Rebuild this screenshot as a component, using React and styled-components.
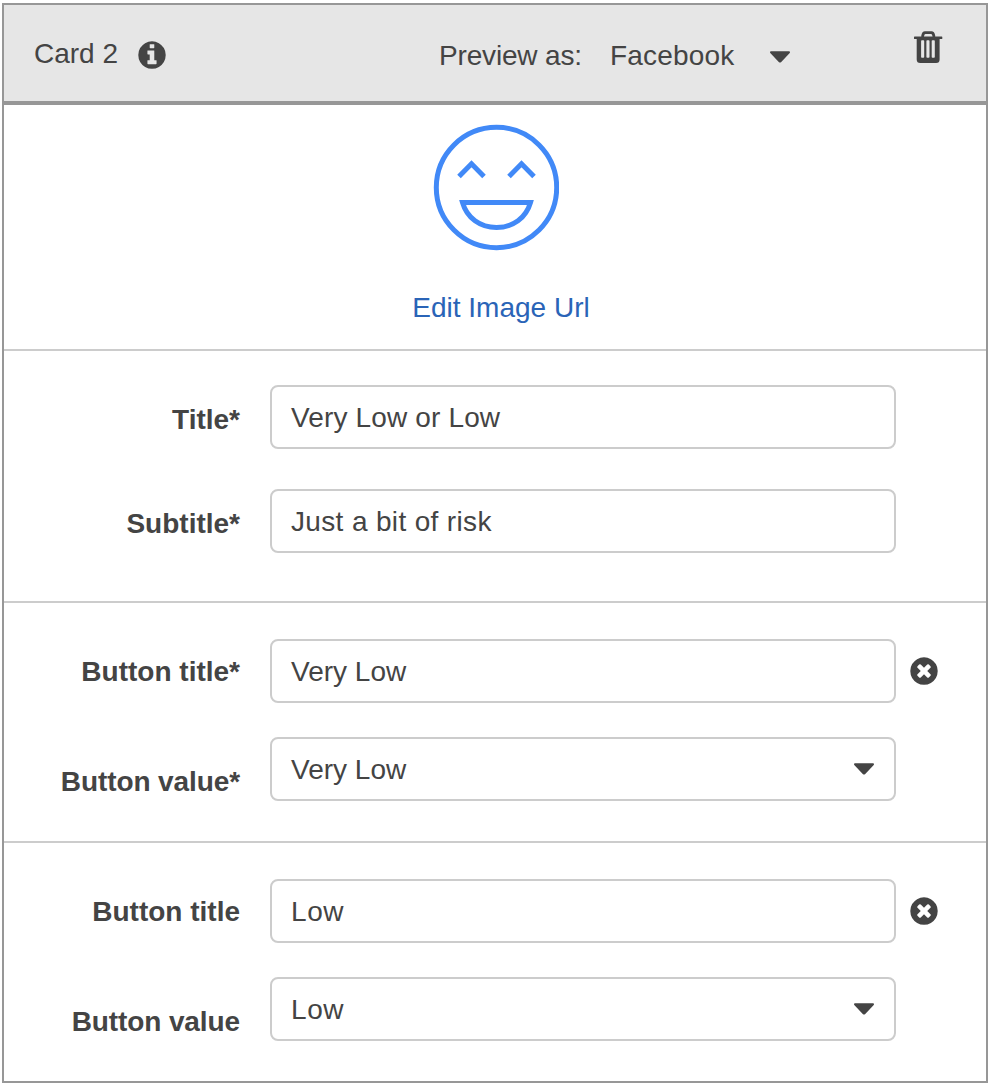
import React from "react";
import styled, { createGlobalStyle } from "styled-components";

const ink = "#444444";

const GlobalStyle = createGlobalStyle`
  *, *::before, *::after { box-sizing: border-box; }
  body {
    margin: 0;
    background: #fff;
    color: ${ink};
    font-family: "Liberation Sans", Arial, sans-serif;
    font-size: 28px;
    line-height: 32px;
  }
  svg { display: block; flex: none; }
`;

const Card = styled.section`
  width: 986px;
  height: 1080px;
  margin: 3px 0 0 2px;
  border: 2px solid #979797;
  background: #fff;
`;

const Header = styled.header`
  display: flex;
  align-items: flex-start;
  height: 100px;
  padding: 0 43px 0 30px;
  background: #e6e6e6;
  border-bottom: 4px solid #979797;
`;

const Heading = styled.h1`
  display: flex;
  gap: 20px;
  width: 405px;
  margin: 0;
  padding-top: 33px;
  font-size: 28px;
  font-weight: 400;
  white-space: nowrap;

  svg { margin-top: 3px; }
`;

const Text = styled.span`
  display: inline-block;
  letter-spacing: ${(p) => p.$track || 0}px;
  white-space: nowrap;
`;

const Preview = styled.div`
  display: flex;
  flex: 1;
  padding-top: 35px;
  white-space: nowrap;
`;

const PreviewLabel = styled.span`
  width: 171px;
  letter-spacing: -0.17px;
`;

const PreviewSelect = styled.div`
  display: flex;
  justify-content: space-between;
  width: 180px;

  svg { margin-top: 11px; }
`;

const IconButton = styled.button`
  display: flex;
  padding: 0;
  border: 0;
  background: none;
  color: inherit;
  cursor: pointer;
`;

const DeleteButton = styled(IconButton)`
  margin-top: 26px;
`;

const ImagePanel = styled.div`
  display: flex;
  flex-direction: column;
  align-items: center;
  height: 246px;
  padding-top: 19px;
  border-bottom: 2px solid #cccccc;
`;

const EditLink = styled.a`
  margin: 41px 0 0 12px;
  color: #2a64b7;
  text-decoration: none;
  white-space: nowrap;
`;

const Group = styled.div`
  display: flex;
  flex-direction: column;
  gap: ${(p) => p.$gap}px;
  height: ${(p) => p.$height}px;
  padding: ${(p) => p.$top}px 0 0;
  border-bottom: ${(p) => (p.$last ? "0" : "2px solid #cccccc")};
`;

const Row = styled.div`
  display: grid;
  grid-template-columns: 236px 626px 28px;
  column-gap: 0;
  align-items: center;
  height: 64px;
`;

const Label = styled.label`
  padding-top: ${(p) => p.$drop || 0}px;
  font-weight: 700;
  text-align: right;
  letter-spacing: ${(p) => p.$track || 0}px;
  white-space: nowrap;
`;

const Field = styled.div`
  display: flex;
  align-items: center;
  justify-content: space-between;
  height: 64px;
  margin-left: 30px;
  margin-right: -30px;
  padding: 0 20px 0 19px;
  border: 2px solid #cccccc;
  border-radius: 8px;
  background: #fff;

  ${Text} { padding-top: 2px; }
`;

const RemoveButton = styled(IconButton)`
  margin-left: 44px;
`;

const Caret = () => (
  <svg width="20" height="12" viewBox="0 0 20 12" fill="currentColor">
    <path d="M1 .3h18q1 0 1 1 0 .6-.5 1l-8.500 8.900q-1 .8-2 0L.5 2.300Q0 1.900 0 1.300 0 .3 1 .3z" />
  </svg>
);

const DISC =
  "M1664 896q0 209-103 385.5t-279.5 279.5-385.5 103-385.5-103-279.5-279.5-103-385.5 103-385.5 279.5-279.5 385.5-103 385.5 103 279.5 279.5 103 385.5z";

const InfoIcon = () => (
  <svg width="28" height="28" viewBox="112 112 1568 1568" fill="currentColor">
    <path d={"M1152 1376v-160q0-14-9-23t-23-9h-96v-512q0-14-9-23t-23-9h-320q-14 0-23 9t-9 23v160q0 14 9 23t23 9h96v320h-96q-14 0-23 9t-9 23v160q0 14 9 23t23 9h448q14 0 23-9t9-23zM1024 480v-160q0-14-9-23t-23-9h-192q-14 0-23 9t-9 23v160q0 14 9 23t23 9h192q14 0 23-9t9-23z" + DISC} />
  </svg>
);

const RemoveIcon = () => (
  <svg width="28" height="28" viewBox="112 112 1568 1568" fill="currentColor">
    <path d={"M1277 1122q0-26-19-45l-181-181 181-181q19-19 19-45 0-27-19-46l-90-90q-19-19-46-19-26 0-45 19l-181 181-181-181q-19-19-45-19-27 0-46 19l-90 90q-19 19-19 46 0 26 19 45l181 181-181 181q-19 19-19 45 0 27 19 46l90 90q19 19 46 19 26 0 45-19l181-181 181 181q19 19 45 19 27 0 46-19l90-90q19-19 19-46z" + DISC} />
  </svg>
);

const TrashIcon = () => (
  <svg width="29" height="32" viewBox="0 0 29 32" fill="currentColor">
    <path d="M7.300 5.500V4.500Q8 .2 11 .2h6.500Q20.500 .2 21.200 4.500v1h6.500q.6 0 .6.600v1.300q0 .6-.6.600H25.600v20.500q0 3.500-3.500 3.500H6.200q-3.500 0-3.500-3.500V8H.6Q0 8 0 7.400V6.100q0-.6.6-.600zM9.900 5.500h8.700L18 3.700q-.2-.7-1-.7h-5.500q-.8 0-1 .7zM7.100 10v16q0 .8.800.8h1.500q.8 0 .8-.8V10q0-.7-.8-.7H7.900q-.8 0-.8.700zM12.400 10v16q0 .8.800.8h1.500q.8 0 .8-.8V10q0-.7-.8-.7h-1.500q-.8 0-.8.700zM17.700 10v16q0 .8.800.8H20q.8 0 .8-.8V10q0-.7-.8-.7h-1.500q-.8 0-.8.700z" fillRule="evenodd" />
  </svg>
);

const Smiley = () => (
  <svg width="127" height="127" viewBox="0 0 127 127" fill="none" stroke="#4189f7" strokeWidth="5">
    <circle cx="64.500" cy="63.500" r="60.200" />
    <path d="M27 52.500l12.500-12.700 12.500 12.700M77 52.500l12.500-12.700 12.500 12.700" />
    <path d="M30.500 78.500H98.500C94 94 81 103.500 64.500 103.500S35 94 30.500 78.500z" />
  </svg>
);

const groups = [
  {
    height: 252, top: 34, gap: 40,
    rows: [
      { label: "Title*", value: "Very Low or Low", drop: 6, valueTrack: 0.15 },
      { label: "Subtitle*", value: "Just a bit of risk", drop: 6, valueTrack: 0.35 },
    ],
  },
  {
    height: 240, top: 36, gap: 34,
    rows: [
      { label: "Button title*", value: "Very Low", removable: true, drop: 2 },
      { label: "Button value*", value: "Very Low", select: true, drop: 26, track: -0.1 },
    ],
  },
  {
    height: 238, top: 36, gap: 34, last: true,
    rows: [
      { label: "Button title", value: "Low", removable: true, drop: 2, valueTrack: 0.6 },
      { label: "Button value", value: "Low", select: true, drop: 26, track: -0.1, valueTrack: 0.6 },
    ],
  },
];

export default function App() {
  return (
    <>
      <GlobalStyle />
      <Card>
        <Header>
          <Heading>
            <Text>Card 2</Text>
            <InfoIcon />
          </Heading>
          <Preview>
            <PreviewLabel>Preview as:</PreviewLabel>
            <PreviewSelect>
              <Text $track={0.2}>Facebook</Text>
              <Caret />
            </PreviewSelect>
          </Preview>
          <DeleteButton aria-label="Delete card">
            <TrashIcon />
          </DeleteButton>
        </Header>
        <ImagePanel>
          <Smiley />
          <EditLink>Edit Image Url</EditLink>
        </ImagePanel>
        {groups.map((g, i) => (
          <Group key={i} $height={g.height} $top={g.top} $gap={g.gap} $last={g.last}>
            {g.rows.map((r) => (
              <Row key={r.label}>
                <Label $drop={r.drop} $track={r.track}>{r.label}</Label>
                <Field>
                  <Text $track={r.valueTrack}>{r.value}</Text>
                  {r.select && <Caret />}
                </Field>
                {r.removable && (
                  <RemoveButton aria-label="Remove button">
                    <RemoveIcon />
                  </RemoveButton>
                )}
              </Row>
            ))}
          </Group>
        ))}
      </Card>
    </>
  );
}
